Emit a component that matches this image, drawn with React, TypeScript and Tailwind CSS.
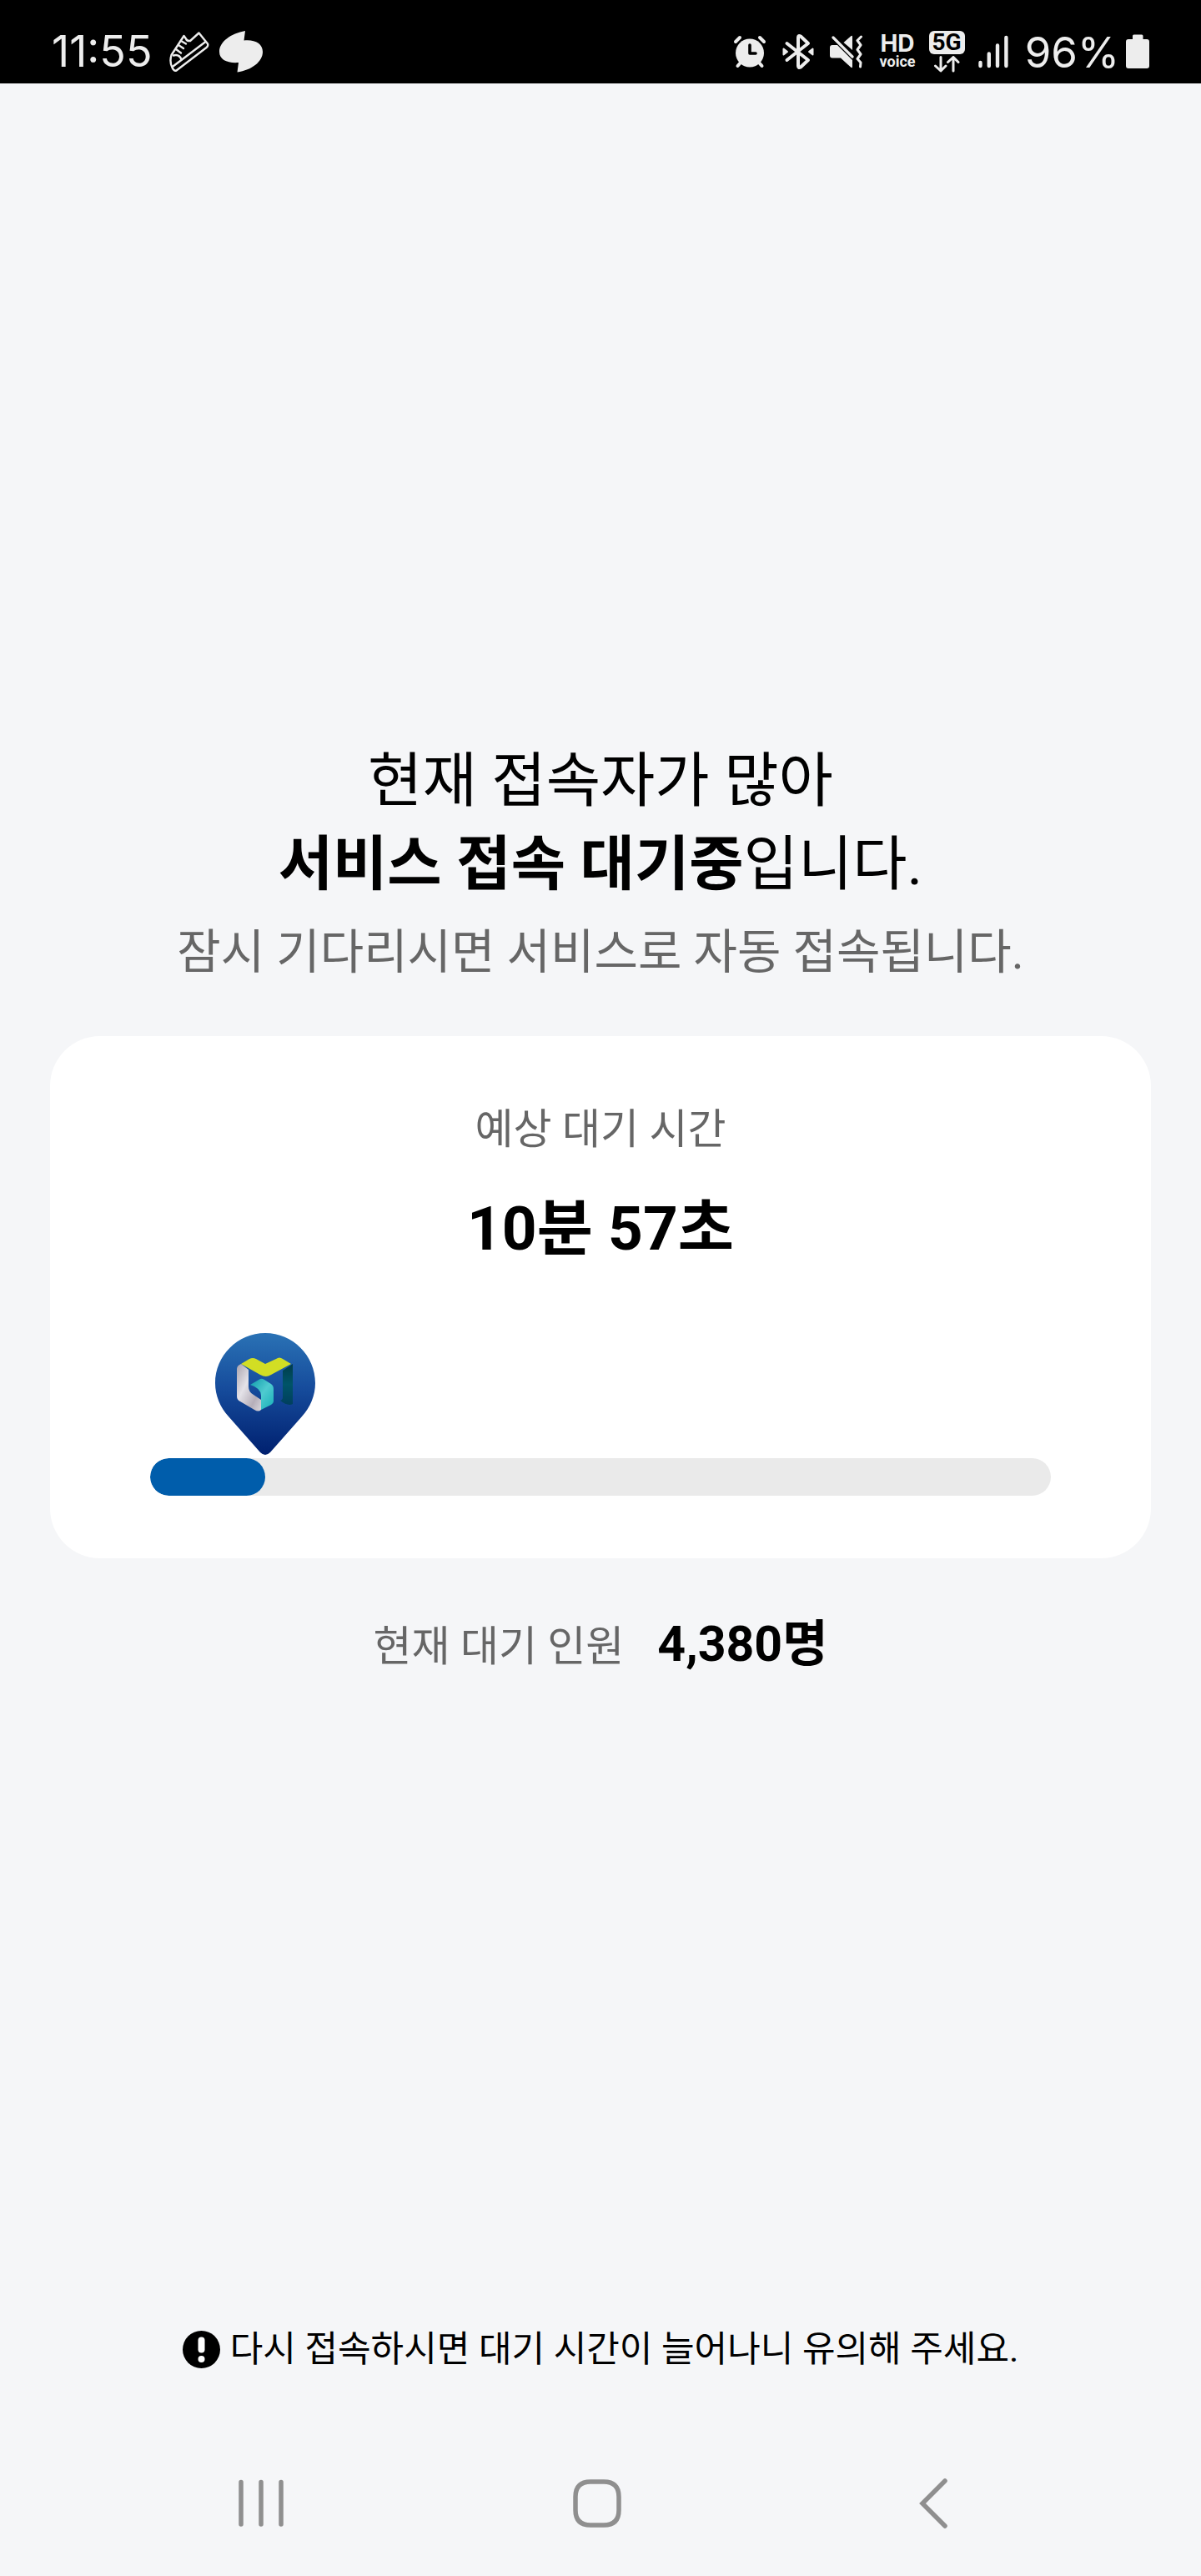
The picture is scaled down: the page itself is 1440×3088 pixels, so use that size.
const waiting = {
  minutes: 10,
  seconds: 57,
  people: 4380,
  progress: 12.8,
};

function ShoeIcon() {
  return (
    <svg
      className="h-12 w-12"
      viewBox="0 0 48 48"
      fill="none"
      stroke="#ededed"
      strokeWidth="2.4"
      strokeLinecap="round"
      strokeLinejoin="round"
    >
      <path d="M17.500 5 L2.500 28 Q0 36 3.500 43 Q5.500 47.500 8.500 46.500 L44.500 19 Q47 17 46 14.500 L35.500 1.500 L25 11 Q21 11.500 20 8.500 Z" />
      <path d="M4.500 41.500 L43.500 12" />
      <path d="M5 28.500 Q12 26.500 14.500 33.500" />
      <path d="M14 11 L20 14.500 M11 16 L17 20 M8 21 L14 25.500" />
    </svg>
  );
}

function LeafIcon() {
  return (
    <svg className="h-[50px] w-[52px]" viewBox="0 0 52 50" fill="#ededed">
      <path d="M31 0 L29.500 11.500 C42 10 52 15 52 25 C52 37 39 47 21.500 49.500 L23 38 C10 39 0 35 0 25 C0 13 14 3 31 0 Z" />
    </svg>
  );
}

function AlarmIcon() {
  return (
    <svg
      className="h-10 w-10"
      viewBox="0 0 40 40"
      fill="none"
      stroke="#ededed"
      strokeWidth="4"
      strokeLinecap="round"
    >
      <circle cx="20" cy="21.500" r="17" fill="#ededed" stroke="none" />
      <path d="M3 8 L8 3 M37 8 L32 3 M9 33 L5.500 37 M31 33 L34.500 37" />
      <path d="M20 12 V22 H27" stroke="#000" strokeWidth="3.600" strokeLinejoin="round" />
    </svg>
  );
}

function BluetoothIcon() {
  return (
    <svg
      className="h-11 w-[38px]"
      viewBox="0 0 38 44"
      fill="none"
      stroke="#ededed"
      strokeWidth="4"
      strokeLinecap="round"
      strokeLinejoin="round"
    >
      <path d="M5.500 12 L31 32 L22 40.500 Q19 42 19 39 V5 Q19 2 22 3.500 L31 12 L5.500 32" />
      <path d="M1.500 18.500 V25.500 L6 22 Z M36.500 18.500 V25.500 L32 22 Z" fill="#ededed" strokeWidth="2" />
    </svg>
  );
}

function MuteVibrateIcon() {
  return (
    <svg className="h-10 w-10" viewBox="0 0 40 40" fill="#ededed">
      <path d="M3 12 H9 L27 30 V38 Q27 40 25 38.500 L13 27.500 H3 Q0 27.500 0 24.500 V15 Q0 12 3 12 Z" />
      <path d="M16.500 9 L25 1.500 Q27 0 27 2 V18 Z" />
      <path d="M4 3 L27 26" stroke="#ededed" strokeWidth="3.200" strokeLinecap="round" />
      <path
        d="M37.500 2 L33 6.500 L37 12 L33 17.500 L37 23 L33 28.500 L37 33 L36.500 38"
        fill="none"
        stroke="#ededed"
        strokeWidth="3"
        strokeLinecap="round"
        strokeLinejoin="round"
      />
    </svg>
  );
}

function DataArrows() {
  return (
    <svg
      className="h-5 w-8"
      viewBox="0 0 32 20"
      fill="none"
      stroke="#ededed"
      strokeWidth="3"
      strokeLinecap="round"
      strokeLinejoin="round"
    >
      <path d="M9 1.500 V17.500 M2.500 12 L9 18 L15 12" />
      <path d="M24 18 V2 M17.500 7.500 L24 1.500 L30 7.500" />
    </svg>
  );
}

function SignalIcon() {
  return (
    <svg
      className="h-10 w-9"
      viewBox="0 0 36 40"
      stroke="#ededed"
      strokeWidth="4.400"
      strokeLinecap="round"
    >
      <path d="M2.500 33 V37 M12.800 22.500 V37 M23 12.500 V37 M33.400 3 V37" />
    </svg>
  );
}

function BatteryIcon() {
  return (
    <svg className="h-[42px] w-7" viewBox="0 0 28 42" fill="#ededed">
      <path d="M8 2 Q8 0.500 9.500 0.500 H19 Q20.500 0.500 20.500 2 V6 H25 Q28 6 28 9 V38 Q28 41 25 41 H3 Q0 41 0 38 V9 Q0 6 3 6 H8 Z" />
    </svg>
  );
}

function PinIcon() {
  return (
    <svg className="h-[146px] w-[120px]" viewBox="0 0 120 146" role="img" aria-label="MG">
      <defs>
        <linearGradient id="pin" x1="0" y1="0" x2="0" y2="1">
          <stop offset="0" stopColor="#2a72b5" />
          <stop offset="0.45" stopColor="#164c9c" />
          <stop offset="1" stopColor="#00206f" />
        </linearGradient>
        <linearGradient id="silver" x1="0" y1="0" x2="1" y2="1">
          <stop offset="0" stopColor="#a9a3ad" />
          <stop offset="0.4" stopColor="#e4e2e8" />
          <stop offset="0.75" stopColor="#b5aeb9" />
          <stop offset="1" stopColor="#d9d6dc" />
        </linearGradient>
        <linearGradient id="cyan" x1="0" y1="0" x2="1" y2="1">
          <stop offset="0" stopColor="#0f9bab" />
          <stop offset="0.5" stopColor="#4fcbd0" />
          <stop offset="1" stopColor="#18b0b8" />
        </linearGradient>
        <linearGradient id="teal" x1="0" y1="0" x2="0" y2="1">
          <stop offset="0" stopColor="#003c4a" />
          <stop offset="0.5" stopColor="#005468" />
          <stop offset="1" stopColor="#003f5e" />
        </linearGradient>
      </defs>
      <path
        d="M60 0 C93 0 120 27 120 60 C120 75 114 89 104 100 L66 143 Q60 149 54 143 L16 100 C6 89 0 75 0 60 C0 27 27 0 60 0 Z"
        fill="url(#pin)"
      />
      <path
        d="M31 37 L40 44 V64 Q40 71 46 74 L55 80 V92 Q52 95 47 92 L30 82 Q26 80 26 76 V43 Q26 39 31 37 Z"
        fill="url(#silver)"
      />
      <path
        d="M42 62 L54 55 Q56 54 59 56 L67 61 Q70 63 70 67 V82 Q70 84 67 86 L55 92 V75 Q55 66 42 62 Z"
        fill="url(#cyan)"
      />
      <path d="M81 45 L93 37 V85 Q87 88 78 81 Q81 80 81 77 Z" fill="url(#teal)" />
      <path
        d="M31 37 L41 31 Q45 29 49 31 L60 37 L73 31 Q77 28 81 31 L91 37 L67 50 Q61 54 54 50 Z"
        fill="#d2de24"
      />
    </svg>
  );
}

function NoticeIcon() {
  return (
    <svg className="h-[45px] w-[45px] shrink-0" viewBox="0 0 45 45">
      <circle cx="22.500" cy="22.500" r="22.500" fill="#000" />
      <path d="M22.500 11.500 V22.500" stroke="#fff" strokeWidth="8" strokeLinecap="round" />
      <circle cx="22.500" cy="34" r="4" fill="#fff" />
    </svg>
  );
}

function StatusBar() {
  return (
    <header className="flex h-[100px] items-center justify-between bg-black px-[62px] pt-6 text-[#ededed]">
      <div className="flex items-center">
        <span className="mr-5 font-[Inter,sans-serif] text-[52px] leading-none">11:55</span>
        <div className="flex items-center gap-3">
          <ShoeIcon />
          <LeafIcon />
        </div>
      </div>

      <div className="flex items-center">
        <div className="flex items-center gap-[19px]">
          <AlarmIcon />
          <BluetoothIcon />
          <MuteVibrateIcon />
          <div className="flex flex-col items-center">
            <span className="font-[Inter,sans-serif] text-[28px] leading-6 font-bold">HD</span>
            <span className="text-[18px] leading-5 font-bold">voice</span>
          </div>
        </div>
        <div className="ml-4 flex flex-col items-center gap-[2px]">
          <span className="rounded-md bg-[#ededed] px-1 text-[28px] leading-7 font-bold text-black">5G</span>
          <DataArrows />
        </div>
        <div className="ml-4">
          <SignalIcon />
        </div>
        <span className="mr-2 ml-5 font-[Inter,sans-serif] text-[51px] leading-none">96%</span>
        <BatteryIcon />
      </div>
    </header>
  );
}

function WaitingCard() {
  return (
    <section className="mt-[60px] rounded-[60px] bg-white px-[120px] pt-[75px] pb-[75px]">
      <h2 className="text-center text-[50px] leading-[75px] text-[#666]">예상 대기 시간</h2>
      <p className="mt-9 text-center text-[73px] leading-[90px] font-bold">
        {waiting.minutes}분 {waiting.seconds}초
      </p>

      <div className="mt-20" style={{ paddingLeft: `${waiting.progress}%` }}>
        <div className="w-fit -translate-x-1/2">
          <PinIcon />
        </div>
      </div>
      <div
        className="mt-1 h-[45px] overflow-hidden rounded-full bg-[#eaeaea]"
        role="progressbar"
        aria-valuenow={waiting.progress}
        aria-label="예상 대기 시간"
      >
        <div className="h-full rounded-full bg-[#005dab]" style={{ width: `${waiting.progress}%` }}></div>
      </div>
    </section>
  );
}

function NavigationBar() {
  return (
    <nav className="flex h-[174px] items-center pr-[120px] pl-28">
      <button className="flex flex-1 justify-center" aria-label="최근 앱">
        <svg className="h-[60px] w-[60px]" viewBox="0 0 60 60" stroke="#8f8f8f" strokeWidth="5.500" strokeLinecap="round">
          <path d="M6 4.500 V55 M30 4.500 V55 M54 4.500 V55" />
        </svg>
      </button>
      <button className="flex flex-1 justify-center" aria-label="홈">
        <svg className="h-[60px] w-[60px]" viewBox="0 0 60 60" fill="none" stroke="#8f8f8f" strokeWidth="5.500">
          <path d="M22 4 H38 Q56 4 56 22 V38 Q56 56 38 56 H22 Q4 56 4 38 V22 Q4 4 22 4 Z" />
        </svg>
      </button>
      <button className="flex flex-1 justify-center" aria-label="뒤로">
        <svg
          className="h-[60px] w-[60px]"
          viewBox="0 0 60 60"
          fill="none"
          stroke="#8f8f8f"
          strokeWidth="5.500"
          strokeLinecap="round"
        >
          <path d="M44 3 L17 30 L44 57" />
        </svg>
      </button>
    </nav>
  );
}

function App() {
  return (
    <div className="flex min-h-screen flex-col bg-[#f5f6f8] font-[Roboto,'Noto_Sans_CJK_KR',sans-serif] text-black">
      <StatusBar />

      <main className="flex flex-1 flex-col px-[60px] pt-[786px]">
        <h1 className="text-center text-[71px] leading-[100px]">
          현재 접속자가 많아
          <br />
          <strong className="font-bold">서비스 접속 대기중</strong>입니다.
        </h1>
        <p className="mt-4 text-center text-[57px] leading-[80px] text-[#666]">
          잠시 기다리시면 서비스로 자동 접속됩니다.
        </p>

        <WaitingCard />

        <p className="mt-[58px] flex items-baseline justify-center gap-10 leading-[90px]">
          <span className="text-[50px] text-[#666]">현재 대기 인원</span>
          <strong className="text-[59px] font-bold">{waiting.people.toLocaleString("en-US")}명</strong>
        </p>

        <p className="mt-auto mb-[68px] flex items-center justify-center gap-3 text-[43px] leading-[60px]">
          <NoticeIcon />
          다시 접속하시면 대기 시간이 늘어나니 유의해 주세요.
        </p>
      </main>

      <NavigationBar />
    </div>
  );
}

export default App;
